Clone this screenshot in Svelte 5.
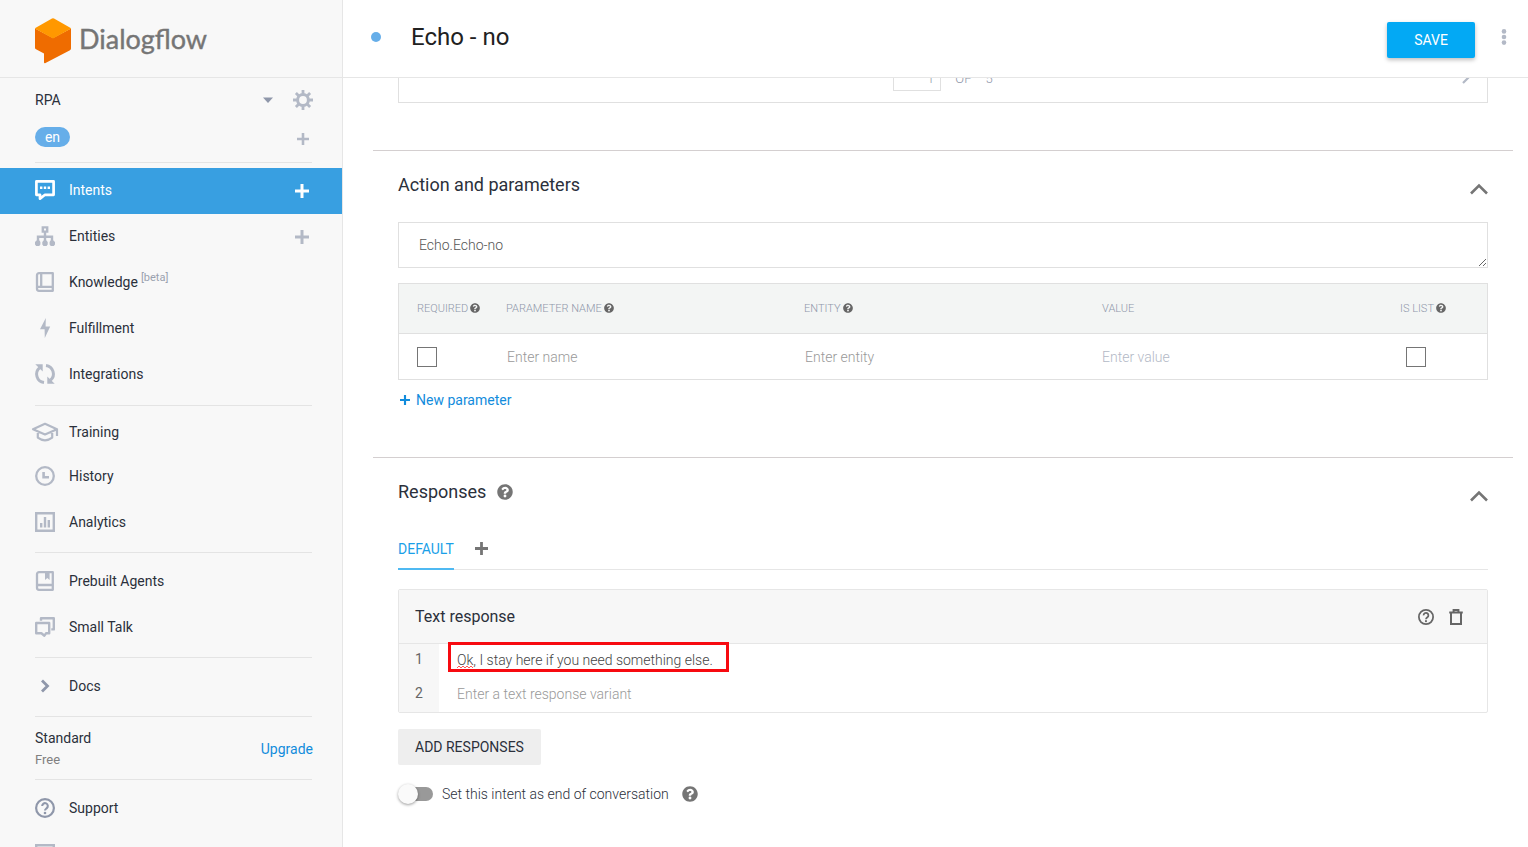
<script lang="ts">
  interface NavItem {
    icon: string;
    label: string;
    tag?: string;
    can_add?: boolean;
  }

  const agents = ["RPA"];

  const nav_groups: NavItem[][] = [
    [
      { icon: "intents", label: "Intents", can_add: true },
      { icon: "entities", label: "Entities", can_add: true },
      { icon: "knowledge", label: "Knowledge", tag: "[beta]" },
      { icon: "fulfillment", label: "Fulfillment" },
      { icon: "integrations", label: "Integrations" },
    ],
    [
      { icon: "training", label: "Training" },
      { icon: "history", label: "History" },
      { icon: "analytics", label: "Analytics" },
    ],
    [
      { icon: "prebuilt", label: "Prebuilt Agents" },
      { icon: "smalltalk", label: "Small Talk" },
    ],
    [{ icon: "docs", label: "Docs" }],
  ];

  let current_page = $state("Intents");
  let agent = $state("RPA");
  let page_number = $state("1");
  let action_name = $state("Echo.Echo-no");
  let responses = $state(["Ok, I stay here if you need something else.", ""]);
  let end_of_conversation = $state(false);
  let show_action = $state(true);
  let show_responses = $state(true);
</script>

{#snippet icon(name: string)}
  <svg class="icon" class:dark={name === "support" || name === "docs"} viewBox="0 0 20 20" aria-hidden="true">
    {#if name === "intents"}
      <path d="M1.4 1.4h17.2v13.4H10l-5 3.8v-3.8H1.4z" fill="none" stroke="currentColor" stroke-width="2.7" stroke-linejoin="round" />
      <path d="M5 6.5h2.4v2.4H5zM8.8 6.5h2.4v2.4H8.8zM12.6 6.5H15v2.4h-2.4z" />
    {:else if name === "entities"}
      <path d="M7.8 1.4h4.4v4.2H7.800zM10 6v9M3 15v-4.200h14V15" fill="none" stroke="currentColor" stroke-width="2.400" />
      <path d="M1.500 14.500h3l.9 1.500v2.600l-1.200 1.400H1.200L0 18.600V16zM8.500 14.500h3l1.200 1.500v2.600L11.500 20h-3l-1.200-1.400V16zM15.500 14.500h3L20 16v2.600L18.800 20h-3l-1.200-1.400V16z" />
    {:else if name === "knowledge"}
      <path d="M4 1.200h13.800v17.600H4a2 2 0 0 1-2-2V3.200a2 2 0 0 1 2-2zM6.200 1.200v13.300M2.500 14.800H18" fill="none" stroke="currentColor" stroke-width="2.300" stroke-linejoin="round" />
    {:else if name === "fulfillment"}
      <path d="M10.800 0 5 11.300h4.600L9.800 20 15.200 8.600h-4.600z" />
    {:else if name === "integrations"}
      <path d="M9 18.600A8.500 8.500 0 0 1 4.500 3.800M11 1.400A8.500 8.500 0 0 1 15.500 16.200" fill="none" stroke="currentColor" stroke-width="3" />
      <path d="M.3.300h7.400v7.200zM19.700 19.700h-7.400v-7.200z" />
    {:else if name === "training"}
      <path d="M-2 7.200 10 1.800l12 5.400-12 5.200zM2.800 9.400v6.200q7.200 5.400 14.400 0V9.400M22 7.200V14" fill="none" stroke="currentColor" stroke-width="2.200" stroke-linejoin="round" />
    {:else if name === "history"}
      <circle cx="10" cy="10" r="8.800" fill="none" stroke="currentColor" stroke-width="2.300" />
      <path d="M8.600 6v5.300H14" fill="none" stroke="currentColor" stroke-width="2.600" />
    {:else if name === "analytics"}
      <path d="M1.200 1.200h17.600v17.600H1.200z" fill="none" stroke="currentColor" stroke-width="2.400" />
      <path d="M6.200 11v4.500M10 5v10.500M13.800 8v7.500" fill="none" stroke="currentColor" stroke-width="2.400" />
    {:else if name === "prebuilt"}
      <path d="M4 1.200h13.800v17.600H4a2 2 0 0 1-2-2V3.200a2 2 0 0 1 2-2zM2.500 14H18" fill="none" stroke="currentColor" stroke-width="2.300" stroke-linejoin="round" />
      <path d="M10 1h4.600v8l-2.300-2L10 9z" />
    {:else if name === "smalltalk"}
      <path d="M6 3.800V1.200h12.800v11.200h-2.500M1.200 6h13v10.300H11l-1.600 2.400-3-2.400H1.200z" fill="none" stroke="currentColor" stroke-width="2.400" stroke-linejoin="round" />
    {:else if name === "docs"}
      <path d="m7 4.500 5.500 5.500L7 15.500" fill="none" stroke="currentColor" stroke-width="2.800" />
    {:else if name === "support"}
      <circle cx="10" cy="10" r="8.900" fill="none" stroke="currentColor" stroke-width="2.200" />
      <path d="M7.200 8a2.800 2.800 0 1 1 4.600 2.100C10.700 11 10 11.300 10 12.600" fill="none" stroke="currentColor" stroke-width="2.100" />
      <circle cx="10" cy="15" r="1.300" />
    {:else if name === "screen"}
      <path d="M1.200 1.200h17.600v17.600H1.200z" fill="none" stroke="currentColor" stroke-width="2.400" />
    {/if}
  </svg>
{/snippet}

{#snippet plus()}
  <svg class="plus" viewBox="0 0 14 14" aria-hidden="true">
    <path d="M7 0v14M0 7h14" fill="none" stroke="currentColor" stroke-width="3" />
  </svg>
{/snippet}

{#snippet help()}
  <svg class="help" viewBox="0 0 512 512" aria-hidden="true">
    <path d="M504 256c0 137-111 248-248 248S8 393 8 256C8 119 119 8 256 8s248 111 248 248zM263 90c-55 0-90 23-117 64-3 5-2 12 3 16l34 26c6 4 13 3 17-2 18-23 30-36 57-36 21 0 46 13 46 33 0 15-12 23-32 34-24 14-55 30-55 71v4c0 7 5 12 12 12h56c7 0 12-5 12-12v-1c0-29 83-30 83-107 0-58-60-102-116-102zM256 338a46 46 0 1 0 0 92 46 46 0 0 0 0-92z" />
  </svg>
{/snippet}

{#snippet chevron()}
  <svg viewBox="0 0 18 12" aria-hidden="true">
    <path d="m1 10.500 8-8 8 8" fill="none" stroke="currentColor" stroke-width="2.600" />
  </svg>
{/snippet}

<div class="console">
  <aside class="sidebar">
    <a class="brand" href="#home">
      <svg viewBox="0 0 36 46" aria-hidden="true">
        <path fill="#ef6c00" d="M0 10.500 18 20l18-9.500v20c0 .8-.4 1.300-1 1.700L10.500 45c-.9.500-1.500.2-1.500-.7V35.500L1 31.300c-.6-.3-1-.9-1-1.600z" />
        <path fill="#ff9800" d="M.3 10 17 .5q1-.6 2 0L35.700 10q.5.500 0 .8L18 20.500.3 10.800q-.5-.3 0-.8z" />
      </svg>
      <span>Dialogflow</span>
    </a>

    <div class="agent-row">
      <select aria-label="Agent" bind:value={agent}>
        {#each agents as name}
          <option>{name}</option>
        {/each}
      </select>
      <svg class="caret" viewBox="0 0 10 6" aria-hidden="true"><path d="M0 .5h10L5 6z" /></svg>
      <button class="settings" aria-label="Agent settings">
        <svg viewBox="0 0 20 20" aria-hidden="true">
          <circle cx="10" cy="10" r="5.400" fill="none" stroke="currentColor" stroke-width="3" />
          <path d="M10 0v4M10 16v4M0 10h4M16 10h4M2.900 2.900l3 3M14.100 14.100l3 3M2.900 17.100l3-3M14.100 5.900l3-3" fill="none" stroke="currentColor" stroke-width="2.800" />
        </svg>
      </button>
    </div>
    <div class="language-row">
      <button class="language">en</button>
      <button class="add" aria-label="Add language">{@render plus()}</button>
    </div>

    <hr />
    {#each nav_groups as group, index}
      <nav class="group-{index}">
        {#each group as item}
          <div class="nav-item" class:current={item.label === current_page}>
            <a href="#{item.icon}" onclick={() => (current_page = item.label)}>
              {@render icon(item.icon)}
              <span>{item.label}{#if item.tag}<sup>{item.tag}</sup>{/if}</span>
            </a>
            {#if item.can_add}
              <button class="add" aria-label="Create {item.label}">{@render plus()}</button>
            {/if}
          </div>
        {/each}
      </nav>
      <hr />
    {/each}

    <div class="plan">
      <div>
        <div>Standard</div>
        <div class="plan-price">Free</div>
      </div>
      <a href="#upgrade">Upgrade</a>
    </div>
    <hr />

    <div class="nav-item">
      <a href="#support">{@render icon("support")}<span>Support</span></a>
    </div>
    <div class="nav-item">
      <a href="#screen" aria-label="Account">{@render icon("screen")}</a>
    </div>
  </aside>

  <main>
    <header>
      <span class="status-dot"></span>
      <h1>Echo - no</h1>
      <button class="save">SAVE</button>
      <button class="more" aria-label="More options">
        <svg viewBox="0 0 6 16" aria-hidden="true">
          <circle cx="3" cy="2.400" r="2.300" /><circle cx="3" cy="8" r="2.300" /><circle cx="3" cy="13.600" r="2.300" />
        </svg>
      </button>
    </header>

    <div class="scroller">
      <div class="pager">
        <span></span>
        <div class="pager-pages">
          <input aria-label="Page" bind:value={page_number} />
          <span>OF</span>
          <span>5</span>
        </div>
        <button aria-label="Next page">
          <svg viewBox="0 0 8 14" aria-hidden="true"><path d="m1 0 6 6-6 6" fill="none" stroke="currentColor" stroke-width="2.200" /></svg>
        </button>
      </div>

      <section class="action">
        <div class="section-title">
          <h2>Action and parameters</h2>
          <button aria-label="Toggle action and parameters" onclick={() => (show_action = !show_action)}>{@render chevron()}</button>
        </div>
        {#if show_action}
          <textarea aria-label="Action name" rows="1" bind:value={action_name}></textarea>
          <table>
            <thead>
              <tr>
                <th class="required">REQUIRED{@render help()}</th>
                <th>PARAMETER NAME{@render help()}</th>
                <th>ENTITY{@render help()}</th>
                <th>VALUE</th>
                <th class="is-list">IS LIST{@render help()}</th>
              </tr>
            </thead>
            <tbody>
              <tr>
                <td class="required"><input type="checkbox" aria-label="Required" /></td>
                <td><input class="picker" aria-label="Parameter name" placeholder="Enter name" /></td>
                <td><input class="picker" aria-label="Entity" placeholder="Enter entity" /></td>
                <td><input class="value" aria-label="Value" placeholder="Enter value" /></td>
                <td class="is-list"><input type="checkbox" aria-label="Is list" /></td>
              </tr>
            </tbody>
          </table>
          <button class="new-parameter">{@render plus()}New parameter</button>
        {/if}
      </section>

      <section class="responses">
        <div class="section-title">
          <h2>Responses</h2>
          {@render help()}
          <button aria-label="Toggle responses" onclick={() => (show_responses = !show_responses)}>{@render chevron()}</button>
        </div>
        {#if show_responses}
          <div class="tabs">
            <button class="tab">DEFAULT</button>
            <button class="add-tab" aria-label="Add platform">{@render plus()}</button>
          </div>

          <div class="card">
            <div class="card-header">
              <h3>Text response</h3>
              <button aria-label="Help">
                <svg viewBox="0 0 20 20" aria-hidden="true">
                  <circle cx="10" cy="10" r="8.900" fill="none" stroke="currentColor" stroke-width="2.200" />
                  <path d="M7 8a3 3 0 1 1 4.800 2.300C10.700 11.200 10 11.500 10 12.800" fill="none" stroke="currentColor" stroke-width="2.200" />
                  <circle cx="10" cy="15.200" r="1.300" />
                </svg>
              </button>
              <button aria-label="Delete response">
                <svg viewBox="0 0 16 16" aria-hidden="true">
                  <path d="M3 4v11h10V4M1.200 3.600h13.600M5.600 3.500V1h4.800v2.500" fill="none" stroke="currentColor" stroke-width="2" />
                </svg>
              </button>
            </div>
            {#each responses as _, index}
              <div class="response-row">
                <label for="response-{index}">{index + 1}</label>
                <input id="response-{index}" placeholder="Enter a text response variant" spellcheck="false" bind:value={responses[index]} />
                {#if index === 0}
                  <svg class="squiggle" viewBox="0 0 16 4" aria-hidden="true">
                    <path d="m0 3 2-2 2 2 2-2 2 2 2-2 2 2 2-2 2 2" />
                  </svg>
                  <span class="highlight"></span>
                {/if}
              </div>
            {/each}
          </div>

          <button class="add-responses">ADD RESPONSES</button>

          <label class="switch">
            <input type="checkbox" bind:checked={end_of_conversation} />
            <span>Set this intent as end of conversation</span>
            {@render help()}
          </label>
        {/if}
      </section>
    </div>
  </main>
</div>

<style>
  :global(body) {
    background: #fff;
    font-family: Roboto, "Liberation Sans", sans-serif;
    font-size: 14px;
    color: #2b303b;
  }

  * {
    box-sizing: border-box;
  }

  svg {
    display: block;
    flex-shrink: 0;
    fill: currentColor;
    overflow: visible;
  }

  button {
    padding: 0;
    border: none;
    background: none;
    font: inherit;
    color: inherit;
    cursor: pointer;
  }

  input,
  select,
  textarea {
    border: none;
    background: none;
    font: inherit;
    color: inherit;
    outline: none;
  }

  a {
    color: inherit;
    text-decoration: none;
  }

  h1,
  h2,
  h3 {
    margin: 0;
    font-weight: 400;
  }

  .console {
    display: flex;
    height: 100vh;
    overflow: hidden;
  }

  .sidebar {
    width: 343px;
    flex-shrink: 0;
    background: #f8f8f8;
    border-right: 1px solid #e6e6e6;
    overflow: hidden;
  }

  .brand {
    display: flex;
    align-items: center;
    gap: 8px;
    height: 78px;
    padding: 4px 35px 0;
    border-bottom: 1px solid #e6e6e6;
    font-family: Lato, Roboto, sans-serif;
    font-size: 27px;
    color: #757575;
    -webkit-text-stroke: 0.4px #757575;
  }

  .brand svg {
    width: 36px;
    height: 46px;
  }

  .brand span {
    padding-bottom: 4px;
  }

  .agent-row {
    display: flex;
    align-items: center;
    gap: 20px;
    height: 30px;
    margin-top: 7px;
    padding: 0 29px 0 35px;
  }

  .agent-row select {
    flex: 1;
    appearance: none;
    padding: 0;
  }

  .caret {
    width: 10px;
    height: 6px;
    color: #8f97aa;
  }

  .settings {
    color: #b3b9c6;
  }

  .settings svg {
    width: 20px;
    height: 20px;
  }

  .language-row {
    display: flex;
    align-items: center;
    justify-content: space-between;
    height: 40px;
    padding: 4px 33px 0 35px;
  }

  .language {
    width: 35px;
    height: 20px;
    border-radius: 10px;
    background: #66aee9;
    color: #fff;
  }

  .plus {
    width: 14px;
    height: 14px;
  }

  .add {
    color: #b3b9c6;
  }

  .language-row .add {
    padding-top: 4px;
  }

  .language-row .plus {
    width: 12px;
    height: 12px;
  }

  hr {
    height: 1px;
    margin: 7px 30px 5px 35px;
    border: none;
    background: #e4e4e4;
  }

  .nav-item {
    display: flex;
    align-items: center;
    height: 46px;
    padding: 0 33px 0 35px;
  }

  .group-1 .nav-item:first-child {
    height: 42px;
  }

  .nav-item a {
    display: flex;
    flex: 1;
    align-items: center;
    gap: 14px;
  }

  .group-0 a {
    padding-bottom: 2px;
  }

  .nav-item.current {
    background: #389fe1;
    color: #fff;
  }

  .icon {
    width: 20px;
    height: 20px;
    color: #b3b9c6;
  }

  .icon.dark {
    color: #8f97aa;
  }

  .current .icon,
  .current .add {
    color: #fff;
  }

  sup {
    margin-left: 3px;
    font-size: 11px;
    line-height: 0;
    color: #9aa1af;
  }

  .plan {
    display: flex;
    align-items: center;
    justify-content: space-between;
    padding: 6px 29px 2px 35px;
    line-height: 21px;
  }

  .plan-price {
    font-size: 13px;
    color: #808080;
  }

  .plan a {
    color: #128cdc;
  }

  main {
    display: flex;
    flex: 1;
    flex-direction: column;
    min-width: 0;
  }

  header {
    display: flex;
    flex-shrink: 0;
    align-items: center;
    height: 78px;
    padding: 0 21px 4px 28px;
    border-bottom: 1px solid #e6e6e6;
  }

  .status-dot {
    width: 10px;
    height: 10px;
    border-radius: 50%;
    background: #66aee9;
  }

  h1 {
    flex: 1;
    margin-left: 30px;
    font-size: 24px;
    color: #212121;
  }

  .save {
    width: 88px;
    height: 36px;
    margin-top: 6px;
    border-radius: 2px;
    background: #03a9f4;
    box-shadow: 0 2px 4px rgba(0, 0, 0, 0.26);
    color: #fff;
  }

  .more {
    margin-left: 26px;
    color: #b3b9c6;
  }

  .more svg {
    width: 6px;
    height: 16px;
  }

  .scroller {
    flex: 1;
    padding: 0 15px 0 30px;
    overflow: hidden;
  }

  /* the phrase list is scrolled under the header, only its pager still shows */
  .pager {
    display: grid;
    grid-template-columns: 1fr auto 1fr;
    align-items: center;
    height: 49px;
    margin: -24px 25px 47px;
    border: 1px solid #e0e0e0;
    border-top: none;
    font-size: 13px;
    font-weight: 300;
    color: #8f97aa;
  }

  .pager-pages {
    display: flex;
    align-items: center;
    gap: 14px;
  }

  .pager-pages input {
    width: 48px;
    height: 26px;
    padding: 0 6px;
    border: 1px solid #e0e0e0;
    text-align: right;
  }

  .pager button {
    justify-self: end;
    margin-right: 17px;
    color: #b3b9c6;
  }

  .pager button svg {
    width: 8px;
    height: 14px;
  }

  section {
    padding: 0 25px;
    border-top: 1px solid #d4cfd0;
  }

  .section-title {
    display: flex;
    align-items: center;
    height: 71px;
    padding-bottom: 4px;
  }

  h2 {
    font-size: 18px;
  }

  .section-title button {
    margin: 8px 0 0 auto;
    color: #757575;
  }

  .section-title button svg {
    width: 18px;
    height: 12px;
  }

  .help {
    width: 16px;
    height: 16px;
    color: #757575;
  }

  .section-title .help {
    margin-left: 11px;
  }

  textarea {
    display: block;
    width: 100%;
    height: 46px;
    padding: 12px 20px;
    border: 1px solid #e0e0e0;
    font-weight: 300;
    line-height: 20px;
    color: #555;
  }

  table {
    width: 100%;
    margin-top: 15px;
    border: 1px solid #e0e0e0;
    border-spacing: 0;
    table-layout: fixed;
  }

  th,
  td {
    padding: 0;
    text-align: left;
  }

  th {
    height: 50px;
    background: #f3f5f4;
    border-bottom: 1px solid #e0e0e0;
    font-size: 11px;
    font-weight: 300;
    color: #8f97aa;
  }

  th .help {
    display: inline-block;
    width: 10px;
    height: 10px;
    margin-left: 2px;
    vertical-align: -1px;
    color: #666;
  }

  td {
    height: 45px;
  }

  td input {
    width: 90%;
    padding: 0;
    font-weight: 300;
  }

  td .picker {
    padding-left: 1px;
  }

  .required {
    width: 107px;
    padding-left: 18px;
  }

  .is-list {
    width: 87px;
  }

  td.is-list {
    padding-left: 6px;
  }

  td input[type="checkbox"] {
    display: block;
    appearance: none;
    width: 20px;
    height: 20px;
    margin: 0;
    border: 1px solid #757575;
    background: #fff;
  }

  ::placeholder {
    color: #999;
    opacity: 1;
  }

  .value::placeholder {
    color: #b3b9c6;
  }

  .new-parameter {
    display: flex;
    align-items: center;
    gap: 6px;
    height: 20px;
    margin: 10px 2px 47px;
    color: #128cdc;
  }

  .new-parameter .plus {
    width: 10px;
    height: 10px;
  }

  .tabs {
    display: flex;
    gap: 21px;
    height: 41px;
    border-bottom: 1px solid #e6e6e6;
  }

  .tab {
    height: 41px;
    border-bottom: 2px solid #4fb9f2;
    color: #1a9fe8;
  }

  .add-tab {
    padding-bottom: 2px;
    color: #757575;
  }

  .add-tab .plus {
    width: 13px;
    height: 13px;
  }

  .card {
    margin-top: 19px;
    border: 1px solid #e6e6e6;
    border-radius: 2px;
  }

  .card-header {
    display: flex;
    align-items: center;
    gap: 14px;
    height: 54px;
    padding: 0 23px 0 16px;
    border-bottom: 1px solid #e6e6e6;
    background: #f7f7f7;
    color: #666;
  }

  h3 {
    flex: 1;
    font-size: 16px;
    color: #2b303b;
  }

  .card-header svg {
    width: 16px;
    height: 16px;
  }

  .response-row {
    position: relative;
    display: flex;
    height: 34px;
  }

  .response-row label {
    width: 40px;
    padding-left: 16px;
    background: #f7f7f7;
    line-height: 30px;
    color: #666;
  }

  .response-row input {
    flex: 1;
    padding: 0 18px 2px;
    font-weight: 300;
    color: #444;
  }

  .squiggle {
    position: absolute;
    left: 58px;
    top: 21px;
    width: 16px;
    height: 4px;
    fill: none;
    stroke: #ff5a5a;
  }

  .highlight {
    position: absolute;
    left: 49px;
    top: -2px;
    width: 281px;
    height: 30px;
    border: 3px solid #f70a10;
    pointer-events: none;
  }

  .add-responses {
    display: block;
    height: 36px;
    margin-top: 16px;
    padding: 0 17px;
    border-radius: 2px;
    background: #eee;
  }

  .switch {
    display: flex;
    align-items: center;
    width: max-content;
    margin-top: 18px;
    font-weight: 300;
    cursor: pointer;
  }

  .switch input {
    position: relative;
    appearance: none;
    width: 32px;
    height: 14px;
    margin: 4px 9px 4px 3px;
    border-radius: 7px;
    background: #999;
  }

  .switch input::before {
    content: "";
    position: absolute;
    left: -3px;
    top: -3px;
    width: 20px;
    height: 20px;
    border-radius: 50%;
    background: #fafafa;
    box-shadow: 0 1px 3px rgba(0, 0, 0, 0.4);
  }

  .switch input:checked::before {
    left: 15px;
  }

  .switch .help {
    margin-left: 13px;
  }
</style>
